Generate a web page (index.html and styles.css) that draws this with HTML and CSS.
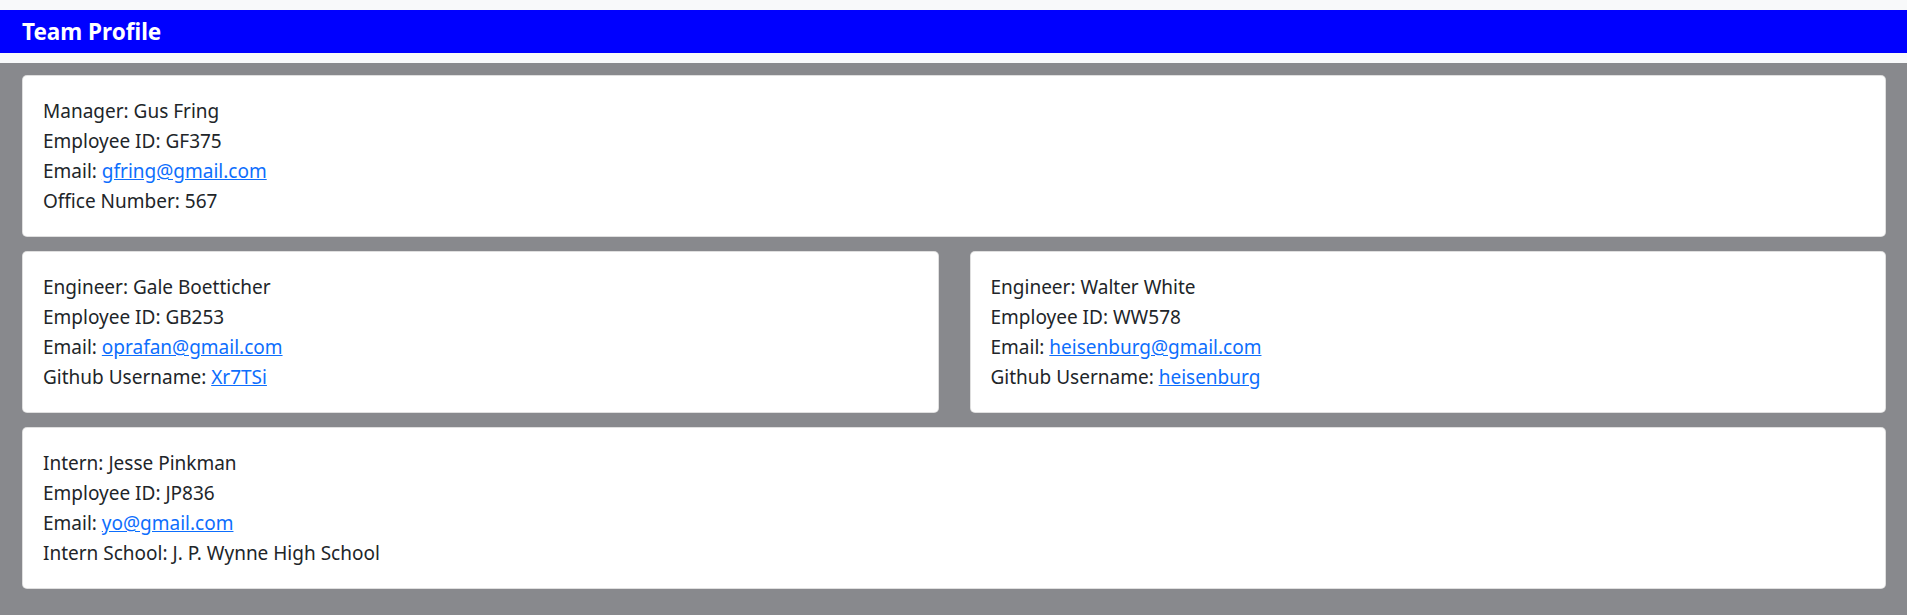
FILE: index.html
```html
<!DOCTYPE html>
<html lang="en">
<head>
<meta charset="utf-8">
<title>Team Profile</title>
<link rel="stylesheet" href="styles.css">
</head>
<body>
<header class="top">
  <div class="bar"><h1 class="title">Team Profile</h1></div>
</header>
<main class="team">
  <section class="card">
    <p>Manager: Gus Fring</p>
    <p>Employee ID: GF375</p>
    <p>Email: <a href="mailto:gfring@gmail.com">gfring@gmail.com</a></p>
    <p>Office Number: 567</p>
  </section>
  <div class="row">
    <section class="card">
      <p>Engineer: Gale Boetticher</p>
      <p>Employee ID: GB253</p>
      <p>Email: <a href="mailto:oprafan@gmail.com">oprafan@gmail.com</a></p>
      <p>Github Username: <a href="#">Xr7TSi</a></p>
    </section>
    <section class="card">
      <p>Engineer: Walter White</p>
      <p>Employee ID: WW578</p>
      <p>Email: <a href="mailto:heisenburg@gmail.com">heisenburg@gmail.com</a></p>
      <p>Github Username: <a href="#">heisenburg</a></p>
    </section>
  </div>
  <section class="card">
    <p>Intern: Jesse Pinkman</p>
    <p>Employee ID: JP836</p>
    <p>Email: <a href="mailto:yo@gmail.com">yo@gmail.com</a></p>
    <p>Intern School: J. P. Wynne High School</p>
  </section>
</main>
</body>
</html>
```
FILE: styles.css
```css
html, body {
  margin: 0;
  padding: 0;
  height: 100%;
}
body {
  font-family: "Segoe UI", "Noto Sans", "Open Sans", sans-serif;
  font-size: 19px;
  line-height: 30px;
  color: #212529;
  background: #88898d;
  display: flex;
  flex-direction: column;
}
.top {
  background: #f8f9fa;
  padding: 10px 0;
}
.bar {
  background: #0000ff;
  height: 43px;
  display: flex;
  align-items: center;
  padding-left: 22px;
}
.title {
  margin: 0;
  color: #fff;
  font-size: 22.5px;
  font-weight: 700;
  line-height: 29px;
}
.team {
  flex: 1;
  background: #88898d;
  padding: 12px 21px 0 22px;
  display: flex;
  flex-direction: column;
  gap: 14px;
}
.row {
  display: flex;
  gap: 31px;
}
.row .card {
  flex: 1;
}
.card {
  background: #fff;
  border: 1px solid rgba(0,0,0,.125);
  border-radius: 5px;
  padding: 20px 20px;
}
.card p {
  margin: 0;
}
a {
  color: #0d6efd;
  text-decoration: underline;
}
```
